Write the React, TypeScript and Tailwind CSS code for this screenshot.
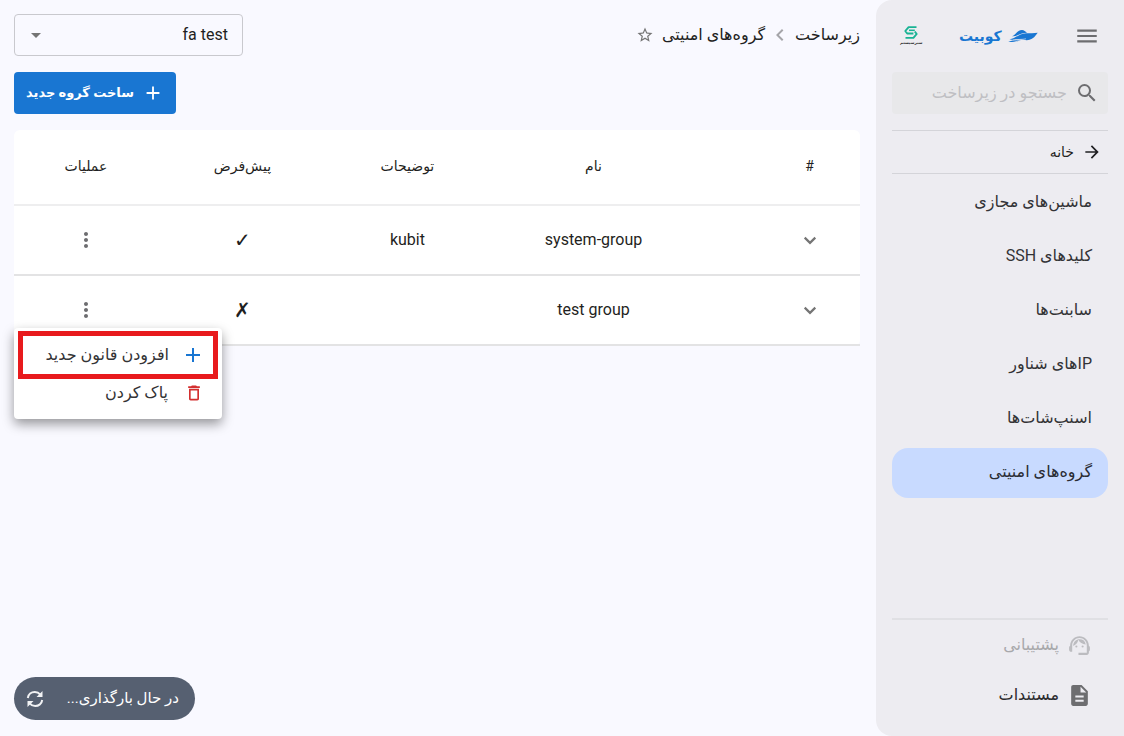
import React from "react";
import {
  MdAdd,
  MdArrowForward,
  MdArrowDropDown,
  MdChevronLeft,
  MdDeleteOutline,
  MdDescription,
  MdMenu,
  MdMoreVert,
  MdSearch,
  MdStarBorder,
  MdSupportAgent,
} from "react-icons/md";

const navItems = [
  "ماشین‌های مجازی",
  "کلیدهای SSH",
  "سابنت‌ها",
  "IPهای شناور",
  "اسنپ‌شات‌ها",
  "گروه‌های امنیتی",
];

const groups = [
  { name: "system-group", description: "kubit", isDefault: true, menuOpen: false },
  { name: "test group", description: "", isDefault: false, menuOpen: true },
];

function BoatLogo() {
  return (
    <svg viewBox="0 0 30 14" className="h-[14px] w-[30px]" aria-hidden="true">
      <g fill="#1976d2">
        <path d="M4 7.200C7.500 6 9.500 1 14 1c2.200 0 3.200 1.600 5 2.700-4 .1-6.500 1-9 2.300C8 7 6 7.500 4 7.200z" />
        <path d="M1.500 10.200C7.500 9.600 11 4.600 18 4.300c4-.2 8 .1 11.700-.6C27.500 7 25 9.800 21.500 10.800c-3.500.9-6-.3-9.500-.3-4 0-7 .6-10.500-.3z" />
        <path d="M.3 13C4 11 8 10.800 13 11.800c-4.500.2-8 1.600-12.700 1.200z" />
      </g>
      <path
        d="M5 11c4-.8 9-.3 13-1.200"
        fill="none"
        stroke="#edecf1"
        strokeWidth="0.6"
      />
    </svg>
  );
}

function PartnerLogo() {
  return (
    <svg viewBox="0 0 14 13" className="h-[13px] w-[14px]" fill="none" aria-hidden="true">
      <g stroke="#19b394" strokeWidth="1.9" strokeLinejoin="round">
        <path d="M12.500 1.100H4.600L1.300 5l1.900 2.500h6.200" />
        <path d="M1.500 11.900h7.900L12.700 8l-1.900-2.500" />
        <path d="M10.800 4.300H5" strokeWidth="1.500" />
      </g>
    </svg>
  );
}

function ExpandIcon() {
  return (
    <svg viewBox="0 0 22 22" className="mx-auto h-[22px] w-[22px]" fill="none" aria-hidden="true">
      <path d="M5.700 8.600l5.300 5.300 5.300-5.300" stroke="currentColor" strokeWidth="2.200" />
    </svg>
  );
}

function RefreshIcon() {
  return (
    <svg viewBox="0 0 18 18" className="h-[18px] w-[18px]" fill="none" aria-hidden="true">
      <path
        d="M1.800 8C2.300 4.300 5.300 2 8.800 2c2.200 0 4.200 1 5.500 2.600M16.200 10c-.5 3.700-3.500 6-7 6-2.200 0-4.200-1-5.500-2.600"
        stroke="#f1f2f4"
        strokeWidth="2"
      />
      <path d="M16.500 1v6h-6zM1.500 17v-6h6z" fill="#f1f2f4" />
    </svg>
  );
}

function Sidebar() {
  return (
    <aside className="flex w-[248px] shrink-0 flex-col rounded-l-2xl bg-[#edecf1] px-4 pt-4 pb-4">
      <div className="flex h-10 items-center justify-between px-2">
        <button type="button" aria-label="منو" className="text-[#6d6d70]">
          <MdMenu size={26} />
        </button>
        <a href="#" className="flex items-center gap-1.5 text-sm font-bold text-[#1976d2]">
          <BoatLogo />
          کوبیت
        </a>
        <a href="#" className="flex flex-col items-center text-[4px] leading-[8px] font-bold text-[#333336]">
          <PartnerLogo />
          سبزسیستم
        </a>
      </div>
      <label className="mt-4 flex h-[42px] items-center gap-2 rounded bg-[#e8e8ea] pr-[9px] text-[#6d6d70]">
        <MdSearch size={24} className="shrink-0" />
        <input
          type="text"
          aria-label="جستجو"
          placeholder="جستجو در زیرساخت"
          className="w-full min-w-0 bg-transparent text-base outline-none placeholder:text-[#bfbfc3]"
        />
      </label>
      <a
        href="#"
        className="mt-4 flex h-11 items-center gap-2 border-y border-[#d4d4d9] pr-1.5 text-sm text-[#1f1f22]"
      >
        <MdArrowForward size={20} />
        خانه
      </a>
      <nav className="mt-1 flex flex-col gap-1">
        {navItems.map((item, i) => (
          <a
            key={item}
            href="#"
            className={
              i === 5
                ? "flex h-[50px] items-center rounded-2xl bg-[#c8daff] px-4 pb-0.5 text-base text-[#2a2c33]"
                : "flex h-[50px] items-center rounded-2xl px-4 pb-0.5 text-base text-[#333336]"
            }
          >
            {item}
          </a>
        ))}
      </nav>
      <div className="mt-auto flex flex-col border-t-2 border-[#e0e0e4]">
        <a href="#" className="flex h-[50px] items-center gap-2 pr-4 text-base text-[#a8a8ab]">
          <MdSupportAgent size={25} className="text-[#bcbcc0]" />
          پشتیبانی
        </a>
        <a href="#" className="flex h-[50px] items-center gap-2 pr-4 text-base text-[#2b2b2e]">
          <MdDescription size={25} className="text-[#6d6d70]" />
          مستندات
        </a>
      </div>
    </aside>
  );
}

function RowMenu() {
  return (
    <div
      role="menu"
      className="absolute top-13 left-0 z-10 flex w-52 flex-col rounded bg-white pt-[3px] pr-1 pb-3 pl-1 shadow-[0_5px_12px_rgba(0,0,0,0.4)]"
    >
      <button
        type="button"
        role="menuitem"
        className="flex h-12 items-center gap-3 border-[5px] border-[#e81a1d] pr-2 text-base text-[#333336]"
      >
        <MdAdd size={24} className="text-[#1976d2]" />
        افزودن قانون جدید
      </button>
      <button
        type="button"
        role="menuitem"
        className="flex h-7 items-center gap-4 pr-3.5 text-base text-[#333336]"
      >
        <MdDeleteOutline size={20} className="text-[#d32f2f]" />
        پاک کردن
      </button>
    </div>
  );
}

function GroupsTable() {
  return (
    <table className="mt-4 w-full table-fixed border-separate border-spacing-0 rounded-md bg-white text-center text-[#1f1f22]">
      <colgroup>
        <col className="w-[19%]" />
        <col className="w-[25%]" />
        <col className="w-[19%]" />
        <col className="w-[20%]" />
        <col className="w-[17%]" />
      </colgroup>
      <thead>
        <tr className="h-[76px] text-sm">
          {["#", "نام", "توضیحات", "پیش‌فرض", "عملیات"].map((h) => (
            <th
              key={h}
              className="border-b-2 border-[#eeeeef] pb-0.5 font-normal whitespace-nowrap first:pl-[60px]"
            >
              {h}
            </th>
          ))}
        </tr>
      </thead>
      <tbody>
        {groups.map((g) => (
          <tr key={g.name} className="h-[70px] text-base">
            <td className="border-b-2 border-[#e3e3e4] pl-[60px]">
              <button type="button" aria-label="جزئیات" className="block w-full text-[#757575]">
                <ExpandIcon />
              </button>
            </td>
            <td className="border-b-2 border-[#e3e3e4]">{g.name}</td>
            <td className="border-b-2 border-[#e3e3e4]">{g.description}</td>
            <td className="border-b-2 border-[#e3e3e4] text-xl font-bold">{g.isDefault ? "✓" : "✗"}</td>
            <td className="relative border-b-2 border-[#e3e3e4]">
              <button type="button" aria-label="عملیات" className="block w-full text-[#6d6d70]">
                <MdMoreVert size={24} className="mx-auto" />
              </button>
              {g.menuOpen && <RowMenu />}
            </td>
          </tr>
        ))}
      </tbody>
    </table>
  );
}

export default function App() {
  return (
    <div
      dir="rtl"
      className="flex min-h-screen bg-[#f9f9ff] font-[Roboto,'DejaVu_Sans',sans-serif]"
    >
      <Sidebar />
      <main className="flex min-w-0 flex-1 flex-col pt-3.5 pr-4 pb-4 pl-3.5">
        <header className="flex items-center justify-between">
          <div className="flex items-center text-base text-[#1f1f22]">
            <a href="#">زیرساخت</a>
            <MdChevronLeft size={24} className="mx-[3px] text-[#a5a5a9]" />
            <a href="#">گروه‌های امنیتی</a>
            <button type="button" aria-label="نشان کردن" className="mr-2 text-[#757575]">
              <MdStarBorder size={18} />
            </button>
          </div>
          <div className="relative flex items-center">
            <select
              aria-label="پروژه"
              className="h-[42px] w-[229px] appearance-none rounded border border-[#c9c9ce] bg-transparent px-3.5 text-base text-[#1f1f22]"
            >
              <option>fa test</option>
            </select>
            <MdArrowDropDown size={24} className="pointer-events-none absolute left-2.5 text-[#757575]" />
          </div>
        </header>
        <button
          type="button"
          className="mt-4 flex h-[42px] items-center gap-2 self-end rounded bg-[#1976d2] px-3 text-[13px] font-bold text-white"
        >
          <MdAdd size={22} />
          ساخت گروه جدید
        </button>
        <GroupsTable />
        <div
          role="status"
          className="mt-auto flex h-[43px] w-[181px] items-center justify-between self-end rounded-full bg-[#566071] px-3 pr-4 text-[15px] text-white"
        >
          در حال بارگذاری...
          <RefreshIcon />
        </div>
      </main>
    </div>
  );
}
